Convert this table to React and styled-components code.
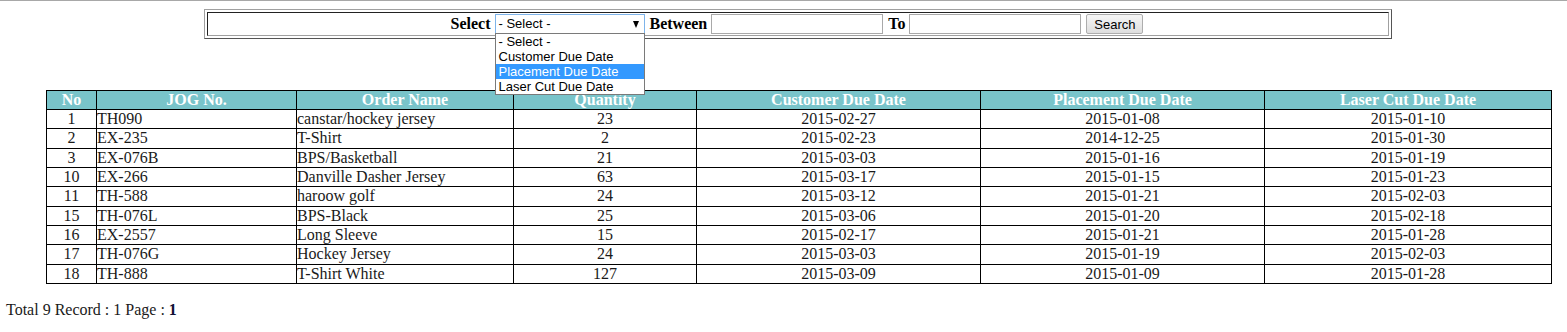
import React from "react";
import styled, { createGlobalStyle } from "styled-components";

const GlobalStyle = createGlobalStyle`
  html, body {
    margin: 0;
    padding: 0;
    background: #fff;
  }
  body {
    font-family: "Liberation Serif", "Times New Roman", serif;
    font-size: 16px;
    color: #000;
  }
`;

const Page = styled.div`
  border-top: 1px solid #a8a8a8;
  padding-top: 8px;
`;

const SearchOuter = styled.div`
  width: 1188px;
  margin-left: 204px;
  box-sizing: border-box;
  border: 1px solid;
  border-color: #a0a0a0 #555 #555 #a0a0a0;
  padding: 2px;
`;

const SearchCell = styled.div`
  border: 1px solid;
  border-color: #222 #a0a0a0 #a0a0a0 #222;
  height: 22px;
  display: flex;
  align-items: center;
  justify-content: center;
  padding-right: 2px;
`;

const Label = styled.span`
  font-weight: bold;
  font-size: 16px;
  margin: 0 4px 0 5px;
  &:first-child {
    margin-left: 0;
  }
`;

const SelectWrap = styled.div`
  position: relative;
  width: 150px;
  height: 20px;
`;

const SelectBox = styled.div`
  box-sizing: border-box;
  height: 20px;
  border: 1px solid #7eb4ea;
  background: #fff;
  font-family: "Liberation Sans", Arial, sans-serif;
  font-size: 13px;
  line-height: 18px;
  padding-left: 3px;
  display: flex;
  justify-content: space-between;
  align-items: center;
`;

const Arrow = styled.span`
  width: 0;
  height: 0;
  border-left: 3.5px solid transparent;
  border-right: 3.5px solid transparent;
  border-top: 7px solid #000;
  margin-right: 5px;
`;

const OptionList = styled.div`
  position: absolute;
  top: 19px;
  left: 0;
  width: 150px;
  box-sizing: border-box;
  border: 1px solid #7a7a7a;
  background: #fff;
  z-index: 10;
  font-family: "Liberation Sans", Arial, sans-serif;
  font-size: 13px;
`;

const Option = styled.div`
  height: 15px;
  line-height: 15px;
  padding-left: 3px;
  background: ${(p) => (p.active ? "#3399ff" : "#fff")};
  color: ${(p) => (p.active ? "#fff" : "#000")};
  white-space: nowrap;
`;

const DateInput = styled.input`
  box-sizing: border-box;
  width: 172px;
  height: 20px;
  border: 1px solid #a9a9a9;
  padding: 0 2px;
  margin: 0;
  font-size: 13px;
`;

const Button = styled.button`
  box-sizing: border-box;
  height: 20px;
  width: 57px;
  margin-left: 5px;
  padding: 0;
  border: 1px solid #adadad;
  border-radius: 2px;
  background: linear-gradient(#f6f6f6, #dedede);
  font-family: "Liberation Sans", Arial, sans-serif;
  font-size: 13px;
  color: #000;
`;

const Grid = styled.table`
  margin: 51px 0 0 46px;
  width: 1505px;
  border-collapse: collapse;
  table-layout: fixed;
`;

const Th = styled.th`
  background: #79c4ca;
  color: #fff;
  font-weight: bold;
  font-size: 16px;
  border: 1px solid #000;
  padding: 0;
  height: 18px;
  line-height: 18px;
  white-space: nowrap;
`;

const Row = styled.tr`
  height: 19.33px;
`;

const Td = styled.td`
  border: 1px solid #000;
  padding: 0;
  line-height: 18px;
  color: #1a1a1a;
  text-align: ${(p) => (p.left ? "left" : "center")};
  white-space: nowrap;
`;

const Footer = styled.div`
  margin: 17px 0 0 6px;
  font-size: 16px;
  color: #1a1a1a;
`;

const Current = styled.b`
  color: #101035;
`;

const columns = [
  { title: "No", width: 50 },
  { title: "JOG No.", width: 200 },
  { title: "Order Name", width: 217 },
  { title: "Quantity", width: 183 },
  { title: "Customer Due Date", width: 284 },
  { title: "Placement Due Date", width: 284 },
  { title: "Laser Cut Due Date", width: 287 },
];

const orders = [
  [1, "TH090", "canstar/hockey jersey", 23, "2015-02-27", "2015-01-08", "2015-01-10"],
  [2, "EX-235", "T-Shirt", 2, "2015-02-23", "2014-12-25", "2015-01-30"],
  [3, "EX-076B", "BPS/Basketball", 21, "2015-03-03", "2015-01-16", "2015-01-19"],
  [10, "EX-266", "Danville Dasher Jersey", 63, "2015-03-17", "2015-01-15", "2015-01-23"],
  [11, "TH-588", "haroow golf", 24, "2015-03-12", "2015-01-21", "2015-02-03"],
  [15, "TH-076L", "BPS-Black", 25, "2015-03-06", "2015-01-20", "2015-02-18"],
  [16, "EX-2557", "Long Sleeve", 15, "2015-02-17", "2015-01-21", "2015-01-28"],
  [17, "TH-076G", "Hockey Jersey", 24, "2015-03-03", "2015-01-19", "2015-02-03"],
  [18, "TH-888", "T-Shirt White", 127, "2015-03-09", "2015-01-09", "2015-01-28"],
];

const dateFields = ["- Select -", "Customer Due Date", "Placement Due Date", "Laser Cut Due Date"];

export default function App() {
  return (
    <Page>
      <GlobalStyle />
      <SearchOuter>
        <SearchCell>
          <Label>Select</Label>
          <SelectWrap>
            <SelectBox>
              - Select -
              <Arrow />
            </SelectBox>
            <OptionList>
              {dateFields.map((f, i) => (
                <Option key={f} active={i === 2}>
                  {f}
                </Option>
              ))}
            </OptionList>
          </SelectWrap>
          <Label>Between</Label>
          <DateInput />
          <Label>To</Label>
          <DateInput />
          <Button>Search</Button>
        </SearchCell>
      </SearchOuter>

      <Grid>
        <colgroup>
          {columns.map((c) => (
            <col key={c.title} style={{ width: c.width }} />
          ))}
        </colgroup>
        <thead>
          <tr>
            {columns.map((c) => (
              <Th key={c.title}>{c.title}</Th>
            ))}
          </tr>
        </thead>
        <tbody>
          {orders.map((o) => (
            <Row key={o[0]}>
              <Td>{o[0]}</Td>
              <Td left>{o[1]}</Td>
              <Td left>{o[2]}</Td>
              <Td>{o[3]}</Td>
              <Td>{o[4]}</Td>
              <Td>{o[5]}</Td>
              <Td>{o[6]}</Td>
            </Row>
          ))}
        </tbody>
      </Grid>

      <Footer>
        Total 9 Record : 1 Page : <Current>1</Current>
      </Footer>
    </Page>
  );
}
